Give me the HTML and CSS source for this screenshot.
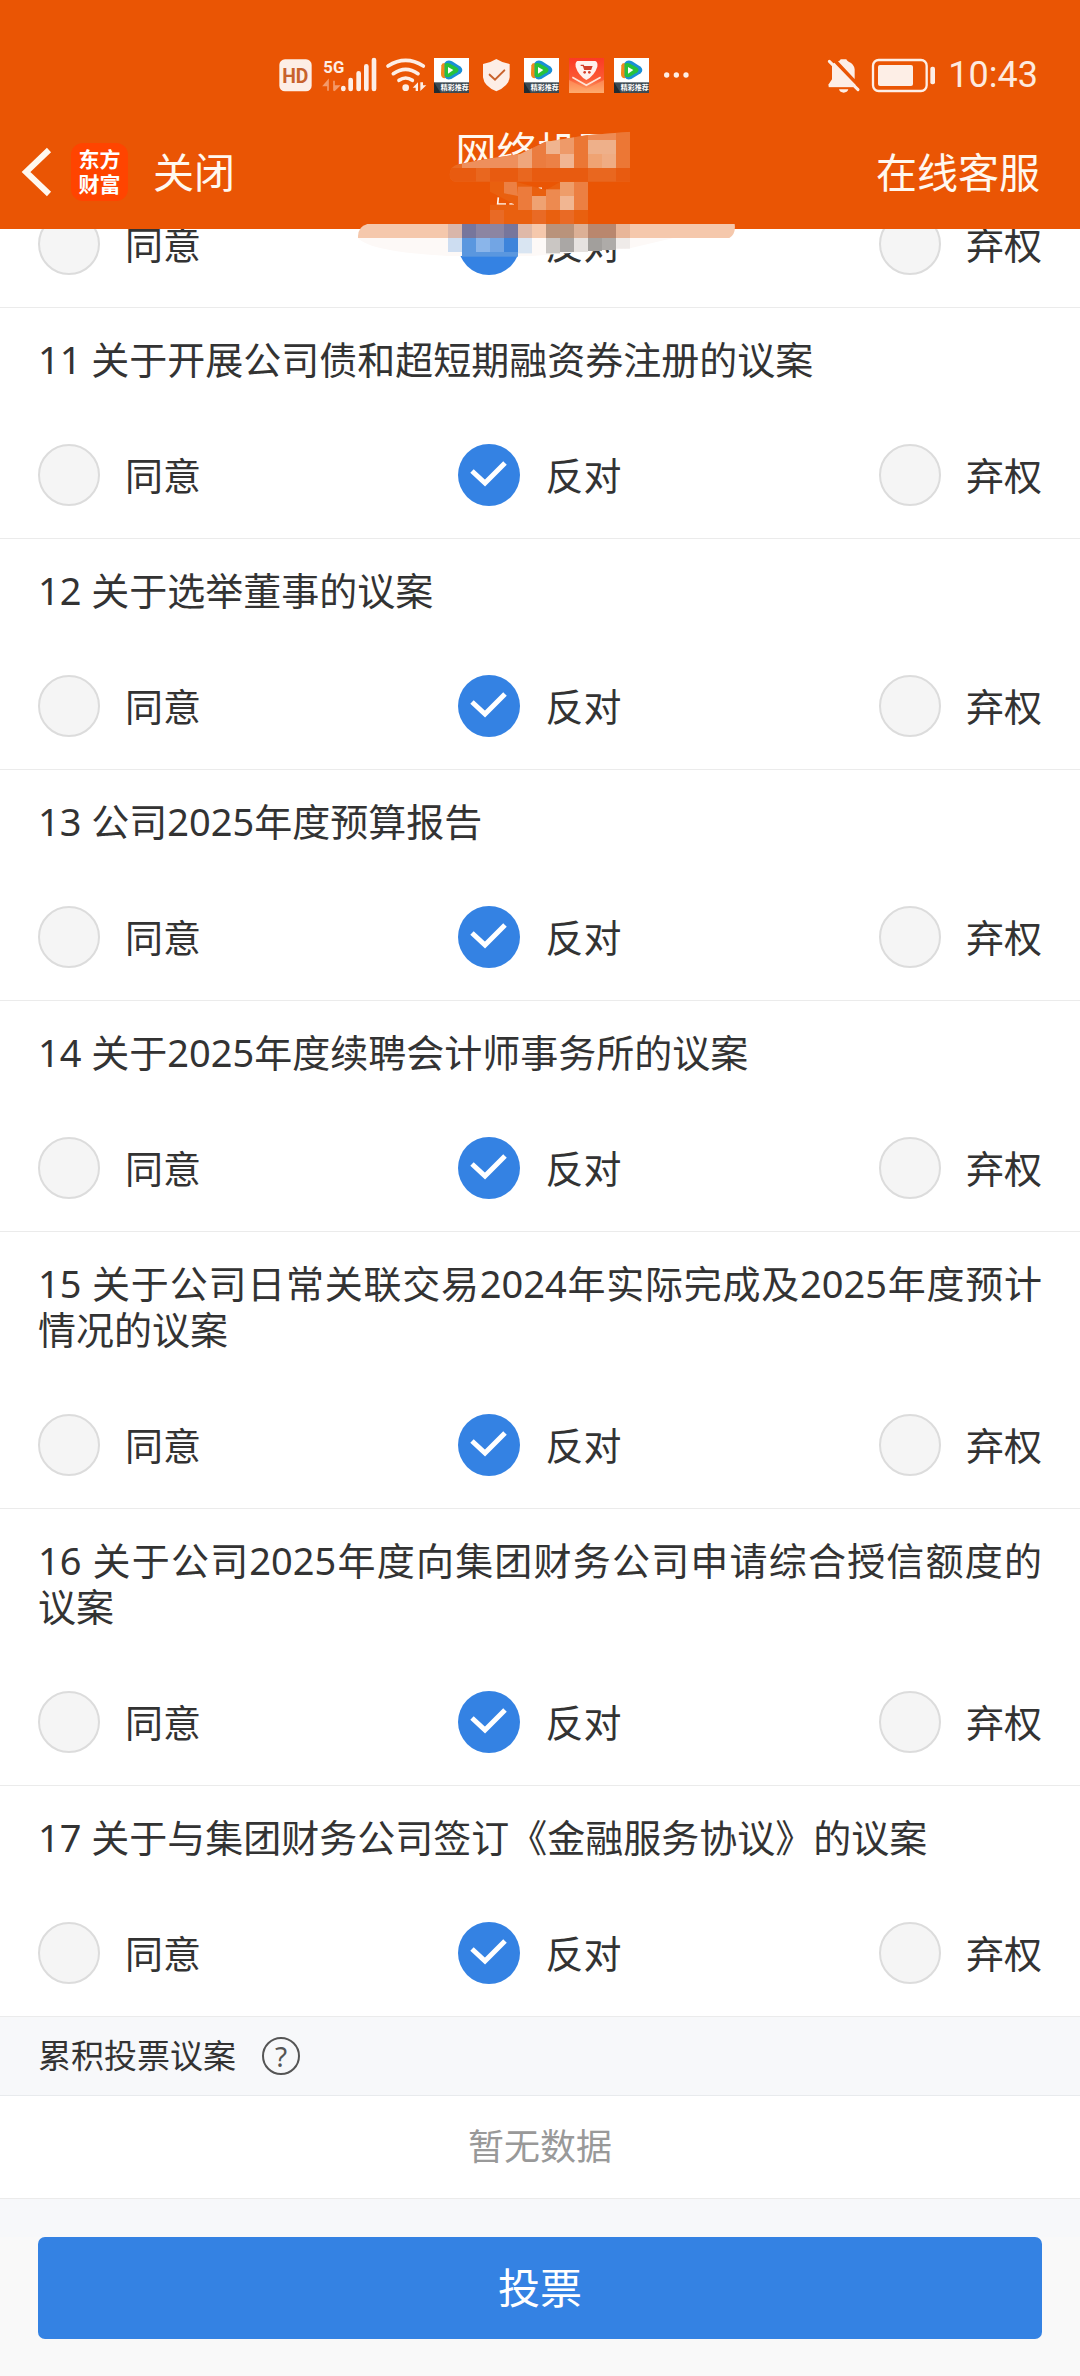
FILE: index.html
```html
<!DOCTYPE html>
<html lang="zh-CN">
<head>
    <meta charset="UTF-8">
    <meta name="viewport" content="width=device-width, initial-scale=1.0">
    <title>网络投票</title>
    <link rel="stylesheet" href="styles.css">
</head>
<body>
    <header class="header">
        <div class="status-bar">
            <div class="status-icons">
                <svg width="33" height="40" viewBox="57 45 99 120">
                    <rect x="58" y="58" width="97" height="96" rx="17" fill="#fdeee6"/>
                    <text x="106" y="129" class="hd-text">HD</text>
                </svg>
                <svg width="52" height="40" viewBox="186 45 156 120">
                    <text x="190" y="98" class="net-text">5G</text>
                    <path d="M204 152V122L192 136H204M222 122V152M222 152L236 138H222" fill="#f39a6b" stroke="#f39a6b" stroke-width="5"/>
                    <g stroke="#fdeee6" stroke-width="14" stroke-linecap="round">
                        <path d="M250 144V147M272 120V147M296 100V147M319 79V147M342 60V147"/>
                    </g>
                </svg>
                <svg width="40" height="40" viewBox="372 45 120 120">
                    <g fill="none" stroke="#fdeee6" stroke-width="11" stroke-linecap="round">
                        <path d="M384 78Q437 44 490 78"/>
                        <path d="M400 101Q437 75 474 101"/>
                        <path d="M417 121Q437 107 457 121"/>
                    </g>
                    <circle cx="437" cy="143" r="10" fill="#fdeee6"/>
                    <path d="M474 153V127L458 143H467V153zM481 127V153L499 136H489V127z" fill="#fdeee6"/>
                </svg>
                <svg width="35" height="40" viewBox="0 -9 105 120">
                    <g id="video-app">
                        <rect width="105" height="105" fill="#fff"/>
                        <path d="M22 22Q24 14 34 15L44 18V58L32 61Q21 60 21 48z" fill="#f08a1c"/>
                        <path d="M32 14Q40 4 54 10L80 26Q90 36 80 46L52 63Q38 68 32 56z" fill="#1a8fd6"/>
                        <path d="M32 18Q38 12 48 17L70 29Q77 36 70 43L46 57Q36 60 32 52z" fill="#26c23a"/>
                        <path d="M42 27L58 36L42 47z" fill="#fff"/>
                        <rect y="73" width="105" height="32" fill="#3d4a52"/>
                        <path d="M0 73L20 105H0z" fill="#222b30"/>
                        <text x="62" y="96" class="app-text">精彩推荐</text>
                    </g>
                </svg>
                <svg width="35" height="40" viewBox="657 45 105 120">
                    <path d="M709 57Q728 69 749 72V112Q746 139 709 154Q672 139 669 112V72Q690 69 709 57z" fill="#fdeee6"/>
                    <path d="M689 104L705 119L733 91" fill="none" stroke="#c8622c" stroke-width="6" stroke-linecap="round"/>
                </svg>
                <svg width="35" height="40" viewBox="0 -9 105 120"><use href="#video-app"/></svg>
                <svg width="35" height="40" viewBox="927 45 105 120">
                    <defs>
                        <linearGradient id="shop" x1="0" y1="0" x2="0" y2="1">
                            <stop offset="0" stop-color="#fb3a24"/>
                            <stop offset="0.6" stop-color="#fb5a35"/>
                            <stop offset="1" stop-color="#fdb172"/>
                        </linearGradient>
                    </defs>
                    <rect x="927" y="54" width="105" height="105" fill="url(#shop)"/>
                    <path d="M927 120L979 146L1032 120V159H927z" fill="#ffa56a" opacity="0.5"/>
                    <path d="M952 63H1006Q1014 66 1012 80Q1004 106 979 120Q955 106 947 80Q945 66 952 63z" fill="#fff1ec"/>
                    <path d="M962 76H970L974 88H992L995 80H972" fill="#d4402a" stroke="#d4402a" stroke-width="4"/>
                    <circle cx="974" cy="97" r="4" fill="#d4402a"/>
                    <circle cx="988" cy="97" r="4" fill="#d4402a"/>
                    <path d="M937 112L979 136L1022 112" fill="none" stroke="#ffe3d6" stroke-width="5"/>
                </svg>
                <svg width="35" height="40" viewBox="0 -9 105 120"><use href="#video-app"/></svg>
                <svg width="35" height="40" viewBox="1197 45 105 120">
                    <g fill="#fdeee6">
                        <circle cx="1220" cy="105" r="8"/>
                        <circle cx="1249" cy="105" r="8"/>
                        <circle cx="1278" cy="105" r="8"/>
                    </g>
                </svg>
            </div>
            <div class="status-right">
                <svg width="32" height="40" viewBox="84 45 96 120">
                    <path d="M96 76Q99 70 103 68L168 136H84L96 118z" fill="#fdeee6"/>
                    <path d="M114 64Q121 62 122 58H139Q140 62 146 65Q162 71 164 88V117z" fill="#fdeee6"/>
                    <path d="M86 138H160" stroke="#fdeee6" stroke-width="7"/>
                    <path d="M117 148H145Q142 158 131 158Q120 158 117 148z" fill="#fdeee6"/>
                    <path d="M88 64L174 149" stroke="#fdeee6" stroke-width="9" stroke-linecap="round"/>
                </svg>
                <svg width="64" height="40" viewBox="216 45 192 120">
                    <rect x="219" y="60" width="161" height="93" rx="17" fill="none" stroke="#fdeee6" stroke-width="7"/>
                    <rect x="234" y="75" width="105" height="63" rx="6" fill="#fdeee6"/>
                    <rect x="391" y="80" width="14" height="53" rx="6" fill="#fdeee6"/>
                </svg>
                <span class="time">10:43</span>
            </div>
        </div>
        <nav class="nav">
            <div class="nav-side">
                <button class="back" aria-label="返回">
                    <svg width="28" height="48" viewBox="0 0 28 48">
                        <path d="M26 2L3 24L26 46" fill="none" stroke="#fff8ef" stroke-width="6"/>
                    </svg>
                </button>
                <span class="logo">东方<br>财富</span>
                <a href="#" class="nav-link">关闭</a>
            </div>
            <h1 class="title">网络投票</h1>
            <a href="#" class="nav-link">在线客服</a>
        </nav>
        <!-- mosaic over the account name -->
        <svg class="mosaic" width="420" height="160" viewBox="0 0 1260 480">
            <defs>
                <clipPath id="band">
                    <path d="M345 215Q328 212 329 192Q332 168 355 163L440 147L540 132L615 96L740 76L870 65V215z"/>
                </clipPath>
                <clipPath id="strip">
                    <path d="M54 384Q52 350 82 342H1184Q1188 372 1168 384z"/>
                </clipPath>
            </defs>
            <g clip-path="url(#band)">
                <rect x="324" y="60" width="546" height="156" fill="#ea6a22"/>
                <path d="M366 132H534V174H366z" fill="#ee8f5c"/>
                <path d="M534 90H576V174H534z" fill="#efa67b"/>
                <path d="M576 90H618V174H576z" fill="#eb7c3f"/>
                <path d="M618 76H660V132H618z" fill="#f0b48f"/>
                <path d="M660 76H702V132H660z" fill="#ee9a69"/>
                <path d="M618 132H660V174H618z" fill="#ec8146"/>
                <path d="M660 132H702V174H660z" fill="#f1b592"/>
                <path d="M702 76H744V174H702z" fill="#eb7735"/>
                <path d="M744 66H828V90H744z" fill="#ee8b54"/>
                <path d="M744 90H828V132H744z" fill="#eeb08a"/>
                <path d="M744 132H786V174H744z" fill="#efa373"/>
                <path d="M786 132H828V174H786z" fill="#efac83"/>
                <path d="M828 60H870V174H828z" fill="#ec7735"/>
                <path d="M324 174H870V216H324z" fill="#e85b10"/>
                <path d="M408 174H450V216H408zM534 174H576V216H534zM744 174H828V216H744z" fill="#e9671f"/>
            </g>
            <path d="M475 262L473 282H498M508 282H522M596 235H606" fill="none" stroke="#fff8ef" stroke-width="5"/>
            <path d="M450 216H530L618 240L660 216H744V342H450V284H525L450 245z" fill="#e9600f"/>
            <path d="M492 216H530L534 258L492 250z" fill="#ec8043"/>
            <path d="M534 230H576V300H534z" fill="#ec7b3c"/>
            <path d="M576 258H618V300H576z" fill="#efa272"/>
            <path d="M618 238H660V300H618z" fill="#ed8a50"/>
            <path d="M660 216H702V258H660z" fill="#ee9d6a"/>
            <path d="M660 258H702V300H660z" fill="#f1b692"/>
            <path d="M702 216H744V300H702z" fill="#ec7f42"/>
            <path d="M450 300H492V342H450zM576 300H618V342H576zM660 300H702V342H660z" fill="#e96a25"/>
            <path d="M54 384Q90 425 324 438H576L870 415L1000 384z" fill="#fdf9f7"/>
            <g clip-path="url(#strip)">
                <rect x="50" y="342" width="1140" height="42" fill="#f5c8ac"/>
                <rect x="324" y="342" width="42" height="42" fill="#d9b6aa"/>
                <rect x="366" y="342" width="168" height="42" fill="#77769c"/>
                <rect x="408" y="342" width="84" height="42" fill="#8c85a2"/>
                <rect x="534" y="342" width="42" height="42" fill="#dfb9a8"/>
                <rect x="618" y="342" width="84" height="42" fill="#b9937b"/>
                <rect x="702" y="342" width="42" height="42" fill="#dcb096"/>
                <rect x="744" y="342" width="84" height="42" fill="#b9876e"/>
                <rect x="828" y="342" width="42" height="42" fill="#e8b699"/>
            </g>
            <rect x="324" y="384" width="42" height="42" fill="#cdddf1"/>
            <rect x="366" y="384" width="168" height="56" fill="#5a97df"/>
            <rect x="408" y="384" width="42" height="42" fill="#8ab5ea"/>
            <rect x="450" y="384" width="42" height="42" fill="#72a5e4"/>
            <rect x="492" y="384" width="42" height="42" fill="#3d84db"/>
            <rect x="534" y="384" width="42" height="46" fill="#d9e5f2"/>
            <rect x="618" y="384" width="42" height="46" fill="#cac6c3"/>
            <rect x="660" y="384" width="42" height="42" fill="#aaa7a5"/>
            <rect x="702" y="384" width="42" height="42" fill="#e6e2e0"/>
            <rect x="744" y="384" width="42" height="39" fill="#a29f9c"/>
            <rect x="786" y="384" width="42" height="36" fill="#aeaba8"/>
            <rect x="828" y="384" width="42" height="32" fill="#efebe9"/>
        </svg>
    </header>

    <main class="content">
        <section class="item">
            <div class="options">
                <label class="option"><input type="radio" name="v10">同意</label>
                <label class="option"><input type="radio" name="v10" checked>反对</label>
                <label class="option"><input type="radio" name="v10">弃权</label>
            </div>
        </section>
        <section class="item">
            <h2 class="item-title">11 关于开展公司债和超短期融资券注册的议案</h2>
            <div class="options">
                <label class="option"><input type="radio" name="v11">同意</label>
                <label class="option"><input type="radio" name="v11" checked>反对</label>
                <label class="option"><input type="radio" name="v11">弃权</label>
            </div>
        </section>
        <section class="item">
            <h2 class="item-title">12 关于选举董事的议案</h2>
            <div class="options">
                <label class="option"><input type="radio" name="v12">同意</label>
                <label class="option"><input type="radio" name="v12" checked>反对</label>
                <label class="option"><input type="radio" name="v12">弃权</label>
            </div>
        </section>
        <section class="item">
            <h2 class="item-title">13 公司2025年度预算报告</h2>
            <div class="options">
                <label class="option"><input type="radio" name="v13">同意</label>
                <label class="option"><input type="radio" name="v13" checked>反对</label>
                <label class="option"><input type="radio" name="v13">弃权</label>
            </div>
        </section>
        <section class="item">
            <h2 class="item-title">14 关于2025年度续聘会计师事务所的议案</h2>
            <div class="options">
                <label class="option"><input type="radio" name="v14">同意</label>
                <label class="option"><input type="radio" name="v14" checked>反对</label>
                <label class="option"><input type="radio" name="v14">弃权</label>
            </div>
        </section>
        <section class="item">
            <h2 class="item-title">15 关于公司日常关联交易2024年实际完成及2025年度预计情况的议案</h2>
            <div class="options">
                <label class="option"><input type="radio" name="v15">同意</label>
                <label class="option"><input type="radio" name="v15" checked>反对</label>
                <label class="option"><input type="radio" name="v15">弃权</label>
            </div>
        </section>
        <section class="item">
            <h2 class="item-title">16 关于公司2025年度向集团财务公司申请综合授信额度的议案</h2>
            <div class="options">
                <label class="option"><input type="radio" name="v16">同意</label>
                <label class="option"><input type="radio" name="v16" checked>反对</label>
                <label class="option"><input type="radio" name="v16">弃权</label>
            </div>
        </section>
        <section class="item">
            <h2 class="item-title">17 关于与集团财务公司签订《金融服务协议》的议案</h2>
            <div class="options">
                <label class="option"><input type="radio" name="v17">同意</label>
                <label class="option"><input type="radio" name="v17" checked>反对</label>
                <label class="option"><input type="radio" name="v17">弃权</label>
            </div>
        </section>

        <div class="section-head">
            <h2 class="section-title">累积投票议案</h2>
            <button class="help" aria-label="帮助">?</button>
        </div>
        <p class="empty">暂无数据</p>
    </main>

    <footer class="footer">
        <button class="submit">投票</button>
    </footer>
</body>
</html>
```

FILE: styles.css
```css
* {
    box-sizing: border-box;
}
body {
    margin: 0;
    font-family: "Noto Sans", "Noto Sans CJK SC", sans-serif;
    font-size: 38px;
    color: #333;
    background: #f7f8fa;
}
h1, h2, p {
    margin: 0;
    font-weight: 400;
}
button {
    font-family: inherit;
    padding: 0;
    border: none;
    background: none;
}
svg {
    display: block;
    overflow: visible;
}

/* Header */
.header {
    position: fixed;
    top: 0;
    left: 0;
    right: 0;
    z-index: 10;
    background: #ea5504;
}
.status-bar {
    display: flex;
    justify-content: space-between;
    align-items: center;
    height: 115px;
    padding: 35px 42px 0 279px;
}
.status-icons {
    display: flex;
    gap: 10px;
}
.status-right {
    display: flex;
    align-items: center;
    gap: 12px;
}
.time {
    font-family: Roboto, sans-serif;
    font-size: 36px;
    line-height: 40px;
    color: #fdeadf;
}
.hd-text {
    font: 700 58px Roboto, sans-serif;
    text-anchor: middle;
    fill: #c8622c;
}
.net-text {
    font: 700 50px "Liberation Sans Narrow", Roboto, sans-serif;
    fill: #fdeee6;
}
.app-text {
    font: 700 21px "Noto Sans CJK SC", sans-serif;
    text-anchor: middle;
    fill: #fff;
}
.nav {
    display: grid;
    grid-template-columns: 1fr auto 1fr;
    align-items: center;
    height: 114px;
    padding: 0 40px 0 23px;
}
.nav-side {
    display: flex;
    align-items: center;
}
.nav-link {
    font-size: 41px;
    line-height: 48px;
    color: #fff8ef;
    text-decoration: none;
    justify-self: end;
}
.logo {
    margin: 0 25px 0 20px;
    padding: 4px 0;
    width: 57px;
    font-size: 21px;
    line-height: 25px;
    font-weight: 700;
    text-align: center;
    color: #fff;
    background: #ff4400;
    border-radius: 12px;
}
.title {
    align-self: start;
    margin-top: 12px;
    padding-left: 12px;
    font-size: 41px;
    line-height: 48px;
    color: #fff8ef;
}
.mosaic {
    position: absolute;
    top: 110px;
    left: 50%;
    margin-left: -200px;
}

/* Proposal list, scrolled under the header */
.content {
    padding-top: 185px;
}
.item {
    padding: 28px 38px 32px;
    background: #fff;
    border-bottom: 1px solid #ebebeb;
}
.item-title {
    margin-bottom: 62px;
    font-size: 38px;
    line-height: 46px;
    text-align: justify;
}
.options {
    display: flex;
    justify-content: space-between;
}
.option {
    display: flex;
    align-items: center;
    gap: 25px;
    line-height: 60px;
}
.option input {
    appearance: none;
    width: 62px;
    height: 62px;
    margin: 0;
    border: 2px solid #dcdcdc;
    border-radius: 50%;
    background: #f5f5f5;
}
.option input:checked {
    border: none;
    background: #3482e3 url("data:image/svg+xml,%3Csvg xmlns='http://www.w3.org/2000/svg' viewBox='0 0 62 62'%3E%3Cpath d='M14 27L27 39L47 19' fill='none' stroke='%23fff' stroke-width='5'/%3E%3C/svg%3E");
}

/* Cumulative voting */
.section-head {
    display: flex;
    align-items: center;
    gap: 26px;
    height: 79px;
    padding: 0 38px;
    border-bottom: 1px solid #e8eaed;
}
.section-title {
    font-size: 33px;
    line-height: 46px;
}
.help {
    width: 38px;
    height: 38px;
    border: 2px solid #555;
    border-radius: 50%;
    font-size: 28px;
    line-height: 34px;
    color: #555;
}
.empty {
    padding: 28px 0;
    font-size: 36px;
    line-height: 46px;
    text-align: center;
    color: #999;
    background: #fff;
    border-bottom: 1px solid #ebebeb;
}

.footer {
    margin-top: 38px;
    padding: 0 38px 37px;
    background: #f9f9f9;
}
.submit {
    display: block;
    width: 100%;
    height: 102px;
    padding-bottom: 6px;
    border-radius: 7px;
    font-size: 42px;
    color: #fff;
    background: #3482e3;
}
```
